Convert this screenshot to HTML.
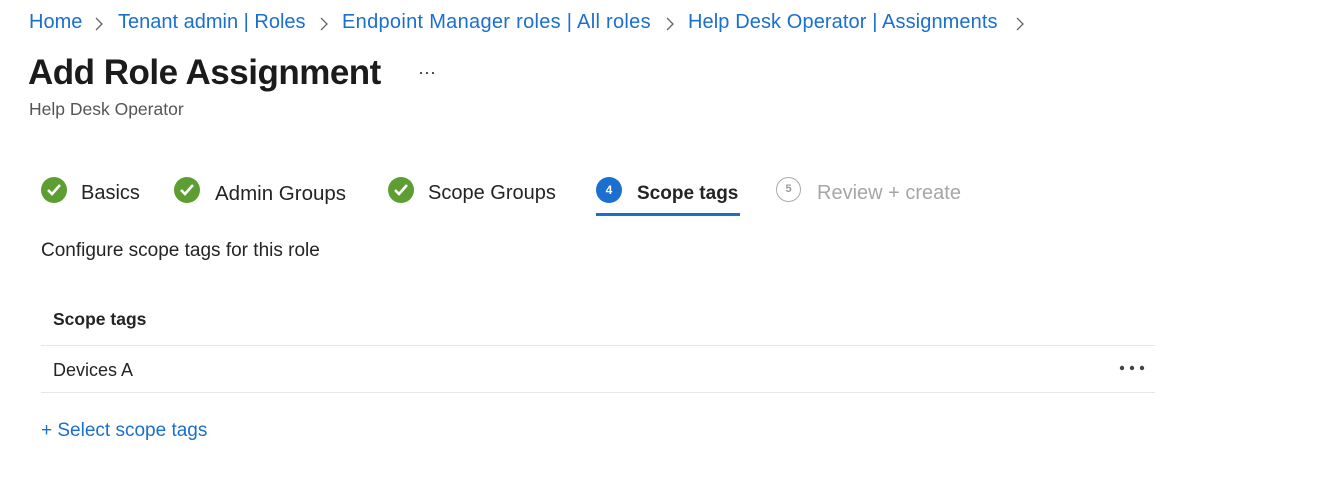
<!DOCTYPE html>
<html><head><style>
body{margin:0;width:1321px;height:497px;background:#fff;font-family:"Liberation Sans",sans-serif;position:relative;overflow:hidden;color:#242424}
.a{position:absolute;white-space:nowrap}
.bc{top:11px;font-size:20px;color:#1a6fcf}
.ic{position:absolute;top:177px;width:26px;height:26px;border-radius:50%;background:#5c9e31}
.ic svg{position:absolute;left:5px;top:6px}
.tab{top:182px;font-size:20px;color:#242424}
</style></head><body>
<div class="a bc" style="left:29px">Home</div>
<svg class="a" style="left:93px;top:16px" width="12" height="16"><path d="M3 2l6 6-6 6" stroke="#666" fill="none" stroke-width="1.3"/></svg>
<div class="a bc" style="left:118px">Tenant admin | Roles</div>
<svg class="a" style="left:318px;top:16px" width="12" height="16"><path d="M3 2l6 6-6 6" stroke="#666" fill="none" stroke-width="1.3"/></svg>
<div class="a bc" style="left:342px;letter-spacing:0.3px">Endpoint Manager roles | All roles</div>
<svg class="a" style="left:664px;top:16px" width="12" height="16"><path d="M3 2l6 6-6 6" stroke="#666" fill="none" stroke-width="1.3"/></svg>
<div class="a bc" style="left:688px;letter-spacing:0.1px">Help Desk Operator | Assignments</div>
<svg class="a" style="left:1014px;top:16px" width="12" height="16"><path d="M3 2l6 6-6 6" stroke="#666" fill="none" stroke-width="1.3"/></svg>

<div class="a" style="left:28px;top:53px;font-size:35px;font-weight:bold;color:#1b1b1b;letter-spacing:-0.5px">Add Role Assignment</div>
<div class="a" style="left:418px;top:62px;font-size:18px;color:#333">···</div>
<div class="a" style="left:29px;top:99px;font-size:17.5px;color:#555">Help Desk Operator</div>

<div class="ic" style="left:41px"><svg width="16" height="14"><path d="M2 7l4 4 8-9" stroke="#fff" stroke-width="2.6" fill="none"/></svg></div>
<div class="a tab" style="left:81px">Basics</div>
<div class="ic" style="left:174px"><svg width="16" height="14"><path d="M2 7l4 4 8-9" stroke="#fff" stroke-width="2.6" fill="none"/></svg></div>
<div class="a tab" style="left:215px;font-size:20.5px">Admin Groups</div>
<div class="ic" style="left:388px"><svg width="16" height="14"><path d="M2 7l4 4 8-9" stroke="#fff" stroke-width="2.6" fill="none"/></svg></div>
<div class="a tab" style="left:428px">Scope Groups</div>
<div class="a" style="left:596px;top:177px;width:26px;height:26px;border-radius:50%;background:#1a6fcf;color:#fff;font-size:12px;font-weight:bold;text-align:center;line-height:26px">4</div>
<div class="a tab" style="left:637px;font-weight:bold;font-size:19px;top:183px">Scope tags</div>
<div class="a" style="left:596px;top:213px;width:144px;height:3px;background:#1a6fcf"></div>
<div class="a" style="left:776px;top:177px;width:23px;height:23px;border-radius:50%;border:1.5px solid #aaa;color:#999;font-size:11px;font-weight:bold;text-align:center;line-height:23px">5</div>
<div class="a tab" style="left:817px;color:#a6a6a6">Review + create</div>

<div class="a" style="left:41px;top:240px;font-size:19px;color:#242424">Configure scope tags for this role</div>
<div class="a" style="left:53px;top:309px;font-size:17.5px;font-weight:bold;color:#242424">Scope tags</div>
<div class="a" style="left:41px;top:345px;width:1114px;height:1px;background:#e6e6e6"></div>
<div class="a" style="left:53px;top:360px;font-size:18px;color:#242424">Devices A</div>
<svg class="a" style="left:1119px;top:364px" width="28" height="8"><circle cx="3" cy="4" r="2.2" fill="#444"/><circle cx="13" cy="4" r="2.2" fill="#444"/><circle cx="23" cy="4" r="2.2" fill="#444"/></svg>
<div class="a" style="left:41px;top:392px;width:1114px;height:1px;background:#e6e6e6"></div>
<div class="a" style="left:41px;top:420px;font-size:19px;color:#1a6fcf">+ Select scope tags</div>
</body></html>
